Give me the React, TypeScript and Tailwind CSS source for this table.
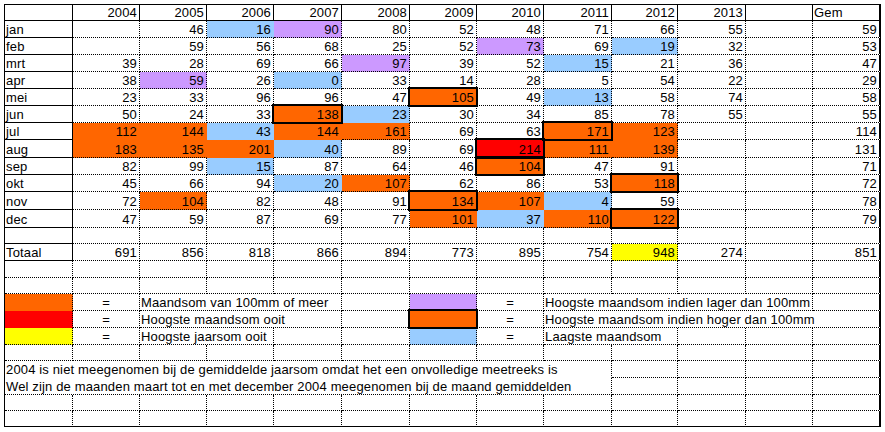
import React from 'react';

type Fill = 'o' | 'b' | 'p' | 'r' | 'y';
type Cell = { c: number; span?: number; text?: string; align?: 'l' | 'r' | 'c'; noBottom?: boolean };

const fillBg: Record<Fill, string> = {
    o: 'bg-[#ff6600]',
    b: 'bg-[#99ccff]',
    p: 'bg-[#cc99ff]',
    r: 'bg-[#ff0000]',
    y: 'bg-[#ffff00]',
};

// row-col -> fill colour
const fills: Record<string, Fill> = {
    '1-3': 'b', '1-4': 'p',
    '2-7': 'p', '2-9': 'b',
    '3-5': 'p', '3-8': 'b',
    '4-2': 'p', '4-4': 'b',
    '5-6': 'o', '5-8': 'b',
    '6-4': 'o', '6-5': 'b',
    '7-1': 'o', '7-2': 'o', '7-3': 'b', '7-4': 'o', '7-5': 'o', '7-8': 'o', '7-9': 'o',
    '8-1': 'o', '8-2': 'o', '8-3': 'o', '8-4': 'b', '8-7': 'r', '8-8': 'o', '8-9': 'o',
    '9-3': 'b', '9-7': 'o',
    '10-4': 'b', '10-5': 'o', '10-9': 'o',
    '11-2': 'o', '11-6': 'o', '11-7': 'o', '11-8': 'b',
    '12-6': 'o', '12-7': 'b', '12-8': 'o', '12-9': 'o',
    '14-9': 'y',
    '17-0': 'o', '17-6': 'p',
    '18-0': 'r', '18-6': 'o',
    '19-0': 'y', '19-6': 'b',
};

// thick black frame: highest month above 100mm
const boxes = new Set(['5-6', '6-4', '7-8', '8-7', '9-7', '10-9', '11-6', '12-9', '18-6']);

const spanCls: Record<number, string> = {
    1: '',
    2: 'col-span-2',
    3: 'col-span-3',
    4: 'col-span-4',
    5: 'col-span-5',
    9: 'col-span-9',
};

const years = [2004, 2005, 2006, 2007, 2008, 2009, 2010, 2011, 2012, 2013];

const months: [string, (number | null)[], number][] = [
    ['jan', [null, 46, 16, 90, 80, 52, 48, 71, 66, 55], 59],
    ['feb', [null, 59, 56, 68, 25, 52, 73, 69, 19, 32], 53],
    ['mrt', [39, 28, 69, 66, 97, 39, 52, 15, 21, 36], 47],
    ['apr', [38, 59, 26, 0, 33, 14, 28, 5, 54, 22], 29],
    ['mei', [23, 33, 96, 96, 47, 105, 49, 13, 58, 74], 58],
    ['jun', [50, 24, 33, 138, 23, 30, 34, 85, 78, 55], 55],
    ['jul', [112, 144, 43, 144, 161, 69, 63, 171, 123, null], 114],
    ['aug', [183, 135, 201, 40, 89, 69, 214, 111, 139, null], 131],
    ['sep', [82, 99, 15, 87, 64, 46, 104, 47, 91, null], 71],
    ['okt', [45, 66, 94, 20, 107, 62, 86, 53, 118, null], 72],
    ['nov', [72, 104, 82, 48, 91, 134, 107, 4, 59, null], 78],
    ['dec', [47, 59, 87, 69, 77, 101, 37, 110, 122, null], 79],
];

const totals = [691, 856, 818, 866, 894, 773, 895, 754, 948, 274];

const blank = (): Cell[] => Array.from({ length: 13 }, (_, c) => ({ c }));

const buildRows = (): Cell[][] => {
    const rows: Cell[][] = [];
    rows.push([
        { c: 0 },
        ...years.map((y, i) => ({ c: i + 1, text: String(y), align: 'r' as const })),
        { c: 11 },
        { c: 12, text: 'Gem', align: 'l' },
    ]);
    months.forEach(([name, vals, gem]) => {
        rows.push([
            { c: 0, text: name, align: 'l' },
            ...vals.map((v, i) => ({ c: i + 1, text: v === null ? '' : String(v), align: 'r' as const })),
            { c: 11 },
            { c: 12, text: String(gem), align: 'r' },
        ]);
    });
    rows.push(blank());
    rows.push([
        { c: 0, text: 'Totaal', align: 'l' },
        ...totals.map((v, i) => ({ c: i + 1, text: String(v), align: 'r' as const })),
        { c: 11 },
        { c: 12, text: '851', align: 'r' },
    ]);
    rows.push(blank());
    rows.push(blank());
    // legend
    rows.push([
        { c: 0 }, { c: 1, text: '=', align: 'c' },
        { c: 2, span: 3, text: 'Maandsom van 100mm of meer', align: 'l' },
        { c: 5 }, { c: 6 }, { c: 7, text: '=', align: 'c' },
        { c: 8, span: 4, text: 'Hoogste maandsom indien lager dan 100mm', align: 'l' },
        { c: 12 },
    ]);
    rows.push([
        { c: 0 }, { c: 1, text: '=', align: 'c' },
        { c: 2, span: 3, text: 'Hoogste maandsom ooit', align: 'l' },
        { c: 5 }, { c: 6 }, { c: 7, text: '=', align: 'c' },
        { c: 8, span: 5, text: 'Hoogste maandsom indien hoger dan 100mm', align: 'l' },
    ]);
    rows.push([
        { c: 0 }, { c: 1, text: '=', align: 'c' },
        { c: 2, span: 2, text: 'Hoogste jaarsom ooit', align: 'l' },
        { c: 4 }, { c: 5 }, { c: 6 }, { c: 7, text: '=', align: 'c' },
        { c: 8, span: 2, text: 'Laagste maandsom', align: 'l' },
        { c: 10 }, { c: 11 }, { c: 12 },
    ]);
    rows.push(blank());
    rows.push([
        { c: 0, span: 9, text: '2004 is niet meegenomen bij de gemiddelde jaarsom omdat het een onvolledige meetreeks is', align: 'l', noBottom: true },
        { c: 9 }, { c: 10 }, { c: 11 }, { c: 12 },
    ]);
    rows.push([
        { c: 0, span: 9, text: 'Wel zijn de maanden maart tot en met december 2004 meegenomen bij de maand gemiddelden', align: 'l' },
        { c: 9 }, { c: 10 }, { c: 11 }, { c: 12 },
    ]);
    rows.push(blank());
    rows.push(blank());
    return rows;
};

const fillAt = (r: number, c: number): Fill | undefined => fills[`${r}-${c}`];

const SheetCell: React.FC<{ r: number; cell: Cell }> = ({ r, cell }) => {
    const span = cell.span ?? 1;
    const last = cell.c + span - 1;
    const fill = fillAt(r, cell.c);
    const labelCol = cell.c === 0 && span === 1 && r <= 14;

    let right = '[border-right:1px_dotted_#000]';
    if (last === 12) right = '[border-right:2px_solid_#000]';
    else if (r === 0 || (labelCol && last === 0)) right = '[border-right:1px_solid_#000]';
    else if (fill && fillAt(r, last + 1)) right = '[border-right:1px_solid_transparent]';

    let bottom = '[border-bottom:1px_dotted_#000]';
    if (r === 0 || labelCol || r === 24) bottom = '[border-bottom:1px_solid_#000]';
    else if (cell.noBottom) bottom = '[border-bottom:1px_solid_transparent]';
    else if (fill && fillAt(r + 1, cell.c)) bottom = '[border-bottom:1px_solid_transparent]';

    const align =
        cell.align === 'r' ? 'justify-end pr-[2px]' : cell.align === 'c' ? 'justify-center' : 'justify-start pl-[1px]';

    return (
        <div
            className={`relative flex items-end whitespace-nowrap leading-[15px] ${spanCls[span]} ${right} ${bottom} ${align} ${fill ? fillBg[fill] : 'bg-white'}`}
        >
            {cell.text}
            {boxes.has(`${r}-${cell.c}`) && (
                <div className="pointer-events-none absolute -inset-[2px] z-10 border-2 border-black" />
            )}
        </div>
    );
};

const App: React.FC = () => {
    const rows = buildRows();

    return (
        <div className="h-[432px] w-[885px] overflow-hidden bg-white pl-[4px] pt-[4px]">
            <div
                className="grid w-max grid-cols-[68px_67px_67px_67px_68px_68px_67px_67px_68px_66px_68px_67px_68px] grid-rows-[16px_17px_17px_17px_17px_17px_17px_17px_18px_17px_17px_18px_18px_16px_17px_17px_16px_17px_17px_17px_16px_17px_17px_16px_16px] border-l border-t border-black font-['Liberation_Sans',Arial,sans-serif] text-[13px] tracking-[0.15px] text-black"
            >
                {rows.flatMap((row, r) => row.map(cell => <SheetCell key={`${r}-${cell.c}`} r={r} cell={cell} />))}
            </div>
        </div>
    );
};

export default App;
